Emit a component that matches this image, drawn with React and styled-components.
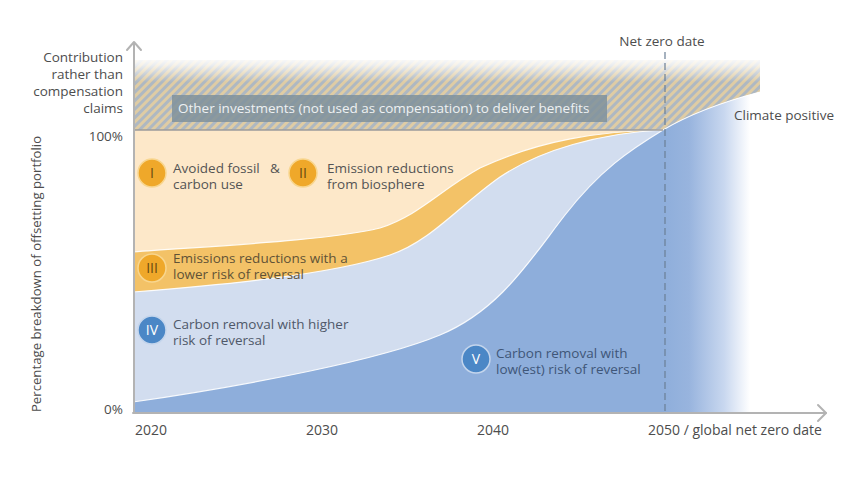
import React from "react";
import styled, { createGlobalStyle } from "styled-components";

const GlobalStyle = createGlobalStyle`
  html, body {
    margin: 0;
    padding: 0;
    background: #ffffff;
  }
  body {
    font-family: "Open Sans", "Noto Sans", sans-serif;
  }
`;

// band boundaries, traced from the reference
const V_TOP =
  "M133,402 C250,385 380,360 440,335 C500,310 530,260 565,215 C600,170 630,150 663,130";
const III_BOTTOM =
  "M133,292 C220,285 330,275 390,255 C430,242 460,205 500,177 C540,150 600,133 663,130";
const III_TOP =
  "M133,252 C230,245 330,240 380,228 C420,215 440,190 480,168 C540,140 600,131 663,130";
const CLOSE = " L663,413 L133,413 Z";

const badges = [
  { id: "I", x: 152, y: 173, tone: "amber" },
  { id: "II", x: 303, y: 173, tone: "amber" },
  { id: "III", x: 152, y: 268, tone: "amber" },
  { id: "IV", x: 152, y: 330, tone: "blue" },
  { id: "V", x: 476, y: 359, tone: "blue" },
];

const notes = [
  { x: 173, y: 173, lines: ["Avoided fossil", "carbon use"], tone: "grey" },
  { x: 327, y: 173, lines: ["Emission reductions", "from biosphere"], tone: "grey" },
  { x: 173, y: 263, lines: ["Emissions reductions with a", "lower risk of reversal"], tone: "brown" },
  { x: 173, y: 329, lines: ["Carbon removal with higher", "risk of reversal"], tone: "slate" },
  { x: 496, y: 358, lines: ["Carbon removal with", "low(est) risk of reversal"], tone: "navy" },
];

const years = [
  { x: 135, label: "2020" },
  { x: 306, label: "2030" },
  { x: 477, label: "2040" },
  { x: 648, label: "2050 / global net zero date" },
];

const noteColours = {
  grey: "#545454",
  brown: "#615236",
  slate: "#4f5869",
  navy: "#3f5678",
};

const App = () => {
  return (
    <>
      <GlobalStyle />
      <Figure>
        <Chart viewBox="0 0 855 480" width="855" height="480">
          <defs>
            <pattern
              id="hatch"
              width="6"
              height="6"
              patternUnits="userSpaceOnUse"
              patternTransform="rotate(45)"
            >
              <rect width="3" height="6" fill="#dfcca4" />
              <rect x="3" width="3" height="6" fill="#aeb8c2" />
            </pattern>
            <linearGradient id="topFade" x1="0" y1="0" x2="0" y2="1">
              <stop offset="0" stopColor="#fff" stopOpacity="1" />
              <stop offset="0.35" stopColor="#fff" stopOpacity="0.75" />
              <stop offset="1" stopColor="#fff" stopOpacity="0" />
            </linearGradient>
            <linearGradient
              id="positive"
              gradientUnits="userSpaceOnUse"
              x1="663"
              y1="0"
              x2="750"
              y2="0"
            >
              <stop offset="0" stopColor="#8eaedb" />
              <stop offset="0.3" stopColor="#98b4de" />
              <stop offset="0.7" stopColor="#c8d7ef" />
              <stop offset="1" stopColor="#ffffff" />
            </linearGradient>
          </defs>

          {/* contribution claims: hatched band above 100% */}
          <Band
            d="M133,60 L760,60 L760,92 Q700,108 663,130 L133,130 Z"
            fill="url(#hatch)"
          />
          <rect x="133" y="56" width="628" height="26" fill="url(#topFade)" />

          {/* offsetting portfolio bands */}
          <Band d="M133,130 L663,130 L663,413 L133,413 Z" fill="#fde8c9" />
          <Band d={III_TOP + CLOSE} fill="#f3c267" />
          <Edge d={III_TOP} />
          <Band d={III_BOTTOM + CLOSE} fill="#d2ddef" />
          <Edge d={III_BOTTOM} />
          <Band d={V_TOP + CLOSE} fill="#8eaedb" />
          <Edge d={V_TOP} />

          {/* beyond net zero: climate positive */}
          <Band
            d="M663,130 Q700,108 760,92 L760,413 L663,413 Z"
            fill="url(#positive)"
          />
          <Edge d="M663,130 Q700,108 760,92" />

          <Rule x1="133" y1="130" x2="663" y2="130" />

          <CalloutBox x="172" y="95" width="435" height="27" />
          <CalloutText x="178" y="113">
            Other investments (not used as compensation) to deliver benefits
          </CalloutText>

          {/* axes */}
          <Axis d="M134,413 L134,43" />
          <Axis d="M127,50 L134,42 L141,50" />
          <Axis d="M133,413 L826,413" />
          <Axis d="M818,405 L826,413 L818,421" />

          <NetZero x1="665" y1="52" x2="665" y2="413" />
          <Label x="662" y="46" anchor="middle">
            Net zero date
          </Label>
          <Label x="734" y="120">
            Climate positive
          </Label>

          <Label x="123" y="62" anchor="end">Contribution</Label>
          <Label x="123" y="79" anchor="end">rather than</Label>
          <Label x="123" y="96" anchor="end">compensation</Label>
          <Label x="123" y="113" anchor="end">claims</Label>
          <Label x="123" y="141" anchor="end">100%</Label>
          <Label x="123" y="414" anchor="end">0%</Label>

          <AxisTitle transform="translate(41 274) rotate(-90)">
            Percentage breakdown of offsetting portfolio
          </AxisTitle>

          {years.map((yr) => (
            <Label key={yr.label} x={yr.x} y="435" size={14}>
              {yr.label}
            </Label>
          ))}

          {notes.map((n) => (
            <Note key={n.lines[0]} x={n.x} y={n.y} fill={noteColours[n.tone]}>
              {n.lines.map((line, i) => (
                <tspan key={line} x={n.x} dy={i === 0 ? 0 : 16}>
                  {line}
                </tspan>
              ))}
            </Note>
          ))}
          <Note x="270" y="173" fill="#545454">
            &amp;
          </Note>

          {badges.map((b) => (
            <g key={b.id}>
              <BadgeDisc cx={b.x} cy={b.y} r="14" $tone={b.tone} />
              <BadgeText x={b.x} y={b.y + 5} $tone={b.tone}>
                {b.id}
              </BadgeText>
            </g>
          ))}
        </Chart>
      </Figure>
    </>
  );
};

export default App;

const Figure = styled.div`
  width: 855px;
  height: 480px;
  overflow: hidden;
  background: #fff;
`;

const Chart = styled.svg`
  display: block;
  font-family: "Open Sans", "Noto Sans", sans-serif;
`;

const Band = styled.path`
  stroke: none;
`;

const Edge = styled.path`
  fill: none;
  stroke: #ffffff;
  stroke-width: 1.2;
  opacity: 0.9;
`;

const Rule = styled.line`
  stroke: #9b9b9b;
  stroke-width: 1.3;
`;

const Axis = styled.path`
  fill: none;
  stroke: #b3b3b3;
  stroke-width: 2;
  stroke-linecap: round;
  stroke-linejoin: round;
`;

const NetZero = styled.line`
  stroke: #6b7f95;
  stroke-width: 1.2;
  stroke-dasharray: 7 4;
`;

const CalloutBox = styled.rect`
  fill: #7f909c;
  opacity: 0.85;
`;

const CalloutText = styled.text`
  font-size: 13.5px;
  fill: #eef1f3;
`;

const Label = styled.text.attrs((p) => ({ textAnchor: p.anchor || "start" }))`
  font-size: ${(p) => p.size || 13.5}px;
  fill: #4d4d4d;
`;

const AxisTitle = styled.text`
  font-size: 13.2px;
  fill: #4d4d4d;
  text-anchor: middle;
`;

const Note = styled.text`
  font-size: 13.5px;
`;

const BadgeDisc = styled.circle`
  fill: ${(p) => (p.$tone === "blue" ? "#4b87c6" : "#efa82a")};
  stroke: ${(p) => (p.$tone === "blue" ? "#c4d5ec" : "#f8d68f")};
  stroke-width: 1.5;
`;

const BadgeText = styled.text`
  font-size: 14px;
  text-anchor: middle;
  fill: ${(p) => (p.$tone === "blue" ? "#ffffff" : "#6a4a10")};
`;
